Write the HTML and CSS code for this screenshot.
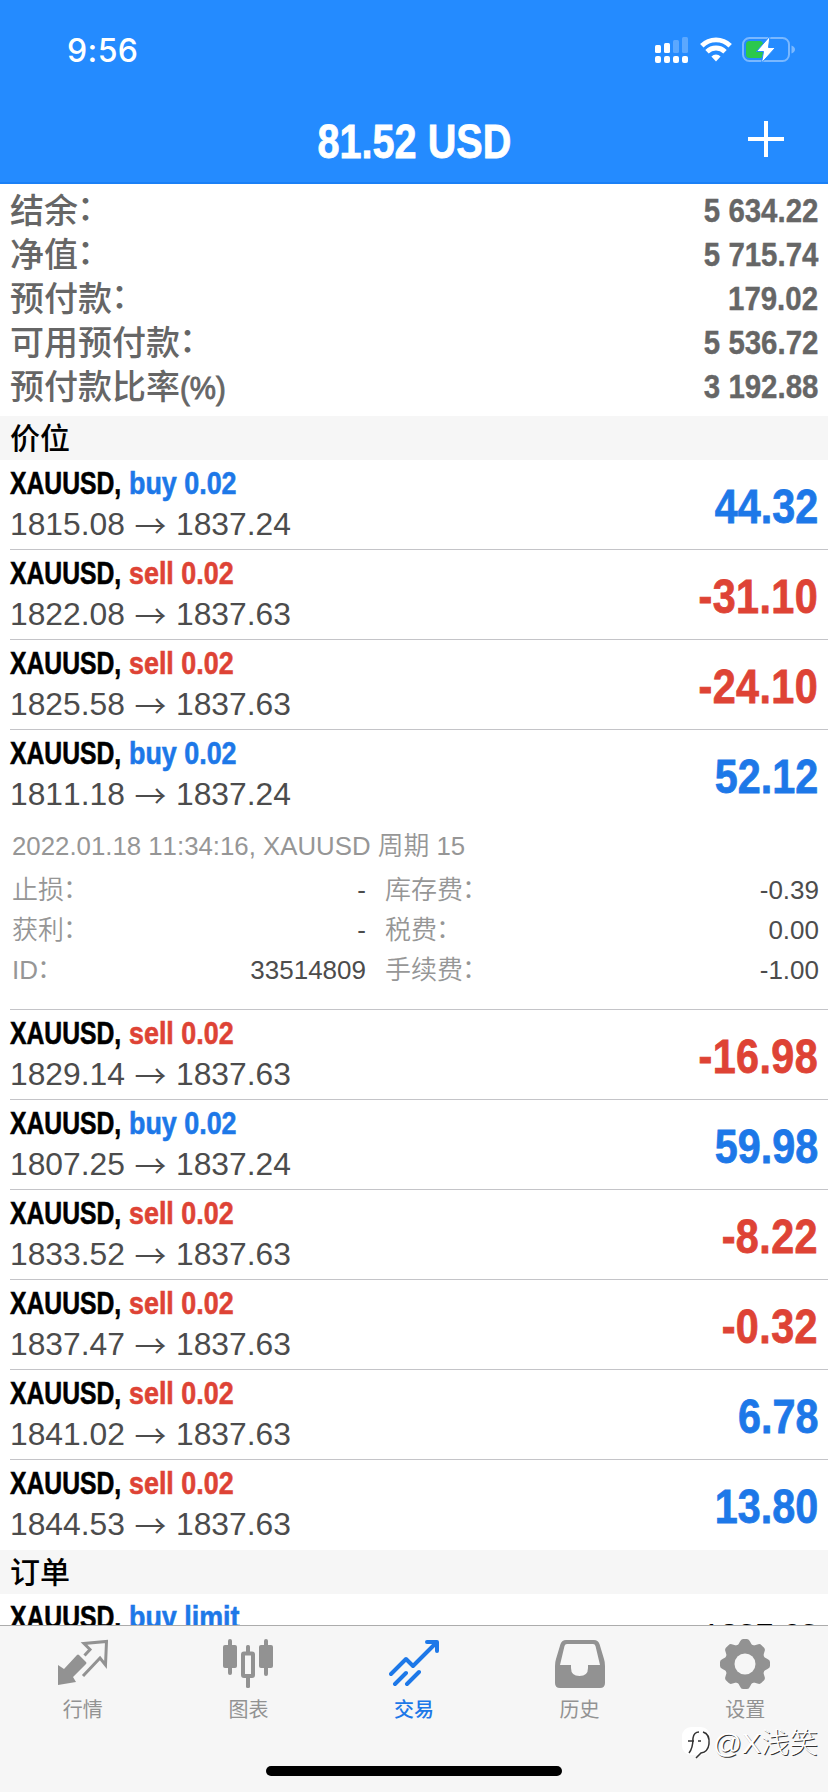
FILE: index.html
```html
<!DOCTYPE html>
<html lang="zh-CN">
<head>
<meta charset="utf-8">
<title>交易</title>
<link rel="stylesheet" href="styles.css">
</head>
<body>
<div class="screen">
  <header class="header">
    <div class="status">
      <span class="time">9:56</span>
      <div class="status-icons">
        <svg class="signal" width="34" height="28" viewBox="0 0 34 28" fill="#fff">
          <rect x="0" y="9" width="6" height="8" rx="1.5"/><rect x="9" y="7" width="6" height="10" rx="1.5"/>
          <g opacity=".25"><rect x="18" y="4" width="6" height="13" rx="1.5"/><rect x="27" y="1" width="6" height="16" rx="1.5"/></g>
          <rect x="0" y="20" width="6" height="7" rx="2"/><rect x="9" y="20" width="6" height="7" rx="2"/><rect x="18" y="20" width="6" height="7" rx="2"/><rect x="27" y="20" width="6" height="7" rx="2"/>
        </svg>
        <svg class="wifi" width="32" height="28" viewBox="0 0 32 28" fill="none" stroke="#fff" stroke-width="4.8">
          <path d="M1.800 9.700A20 20 0 0 1 30.200 9.700"/><path d="M7 15.700A12.800 12.800 0 0 1 25 15.700"/><path d="M11.400 20.400A6.500 6.500 0 0 1 20.600 20.400L16 25.500Z" fill="#fff" stroke="none"/>
        </svg>
        <svg class="battery" width="54" height="28" viewBox="0 0 54 28">
          <rect x="1" y="2" width="46" height="23" rx="6.5" fill="none" stroke="#7ab8ff" stroke-width="2"/>
          <rect x="4" y="5" width="17" height="17" rx="3.5" fill="#2bc84d"/>
          <path d="M49.500 9.500Q53 11 53 13.500T49.500 17.500Z" fill="#7ab8ff"/>
          <path d="M28 0 14.500 15.500H21.500L19.500 27 33.500 11.500H26.500Z" fill="#fff" stroke="#248bff" stroke-width="1"/>
        </svg>
      </div>
    </div>
    <div class="nav">
      <h1 class="title">81.52 USD</h1>
      <svg class="plus" width="36" height="36" viewBox="0 0 36 36" stroke="#fff" stroke-width="4"><path d="M18 0V36M0 18H36"/></svg>
    </div>
  </header>
  <main class="content">
    <section class="summary">
      <div class="sum-row"><span class="sum-label">结余<span class="colon">：</span></span><b class="sum-value">5 634.22</b></div>
      <div class="sum-row"><span class="sum-label">净值<span class="colon">：</span></span><b class="sum-value">5 715.74</b></div>
      <div class="sum-row"><span class="sum-label">预付款<span class="colon">：</span></span><b class="sum-value">179.02</b></div>
      <div class="sum-row"><span class="sum-label">可用预付款<span class="colon">：</span></span><b class="sum-value">5 536.72</b></div>
      <div class="sum-row"><span class="sum-label">预付款比率<span class="pct">(%)</span></span><b class="sum-value">3 192.88</b></div>
    </section>
    <h2 class="section">价位</h2>
    <div class="row"><div class="info"><div class="name"><b class="symbol">XAUUSD,</b><b class="side buy">buy 0.02</b></div><div class="prices"><span>1815.08</span><span class="arrow">→</span><span>1837.24</span></div></div><b class="profit buy">44.32</b></div>
    <div class="row"><div class="info"><div class="name"><b class="symbol">XAUUSD,</b><b class="side sell">sell 0.02</b></div><div class="prices"><span>1822.08</span><span class="arrow">→</span><span>1837.63</span></div></div><b class="profit sell">-31.10</b></div>
    <div class="row"><div class="info"><div class="name"><b class="symbol">XAUUSD,</b><b class="side sell">sell 0.02</b></div><div class="prices"><span>1825.58</span><span class="arrow">→</span><span>1837.63</span></div></div><b class="profit sell">-24.10</b></div>
    <div class="row open"><div class="info"><div class="name"><b class="symbol">XAUUSD,</b><b class="side buy">buy 0.02</b></div><div class="prices"><span>1811.18</span><span class="arrow">→</span><span>1837.24</span></div></div><b class="profit buy">52.12</b></div>
    <div class="details">
      <div class="comment">2022.01.18 11:34:16, XAUUSD 周期 15</div>
      <div class="grid">
        <span>止损<i class="colon">：</i></span><span class="val">-</span><span>库存费<i class="colon">：</i></span><span class="val">-0.39</span>
        <span>获利<i class="colon">：</i></span><span class="val">-</span><span>税费<i class="colon">：</i></span><span class="val">0.00</span>
        <span>ID<i class="colon">：</i></span><span class="val">33514809</span><span>手续费<i class="colon">：</i></span><span class="val">-1.00</span>
      </div>
    </div>
    <div class="row"><div class="info"><div class="name"><b class="symbol">XAUUSD,</b><b class="side sell">sell 0.02</b></div><div class="prices"><span>1829.14</span><span class="arrow">→</span><span>1837.63</span></div></div><b class="profit sell">-16.98</b></div>
    <div class="row"><div class="info"><div class="name"><b class="symbol">XAUUSD,</b><b class="side buy">buy 0.02</b></div><div class="prices"><span>1807.25</span><span class="arrow">→</span><span>1837.24</span></div></div><b class="profit buy">59.98</b></div>
    <div class="row"><div class="info"><div class="name"><b class="symbol">XAUUSD,</b><b class="side sell">sell 0.02</b></div><div class="prices"><span>1833.52</span><span class="arrow">→</span><span>1837.63</span></div></div><b class="profit sell">-8.22</b></div>
    <div class="row"><div class="info"><div class="name"><b class="symbol">XAUUSD,</b><b class="side sell">sell 0.02</b></div><div class="prices"><span>1837.47</span><span class="arrow">→</span><span>1837.63</span></div></div><b class="profit sell">-0.32</b></div>
    <div class="row"><div class="info"><div class="name"><b class="symbol">XAUUSD,</b><b class="side sell">sell 0.02</b></div><div class="prices"><span>1841.02</span><span class="arrow">→</span><span>1837.63</span></div></div><b class="profit buy">6.78</b></div>
    <div class="row last"><div class="info"><div class="name"><b class="symbol">XAUUSD,</b><b class="side sell">sell 0.02</b></div><div class="prices"><span>1844.53</span><span class="arrow">→</span><span>1837.63</span></div></div><b class="profit buy">13.80</b></div>
    <h2 class="section">订单</h2>
    <div class="row order"><div class="info"><div class="name"><b class="symbol">XAUUSD,</b><b class="side buy">buy limit</b></div></div><span class="order-price">1837.63</span></div>
  </main>
  <nav class="tabs">
    <div class="tab">
      <svg width="50" height="50" viewBox="0 0 50 50"><path d="M0 26 6 30 19 16Q20 15 21 16L28 23Q29 24 28 25L15 38 18 43 0 46Z" fill="#929292"/><path d="M26.500 16.500 32 10.500 26 4.500 48.500 2.500 47.500 26 42 19 25 37" fill="none" stroke="#929292" stroke-width="3"/></svg>
      <span>行情</span>
    </div>
    <div class="tab">
      <svg width="50" height="50" viewBox="0 0 50 50" fill="#929292"><rect x="5" y="0" width="4" height="36" rx="2"/><rect y="6" width="14" height="23" rx="2"/><rect x="41" y="0" width="4" height="37" rx="2"/><rect x="36" y="6" width="14" height="23" rx="2"/><rect x="23" y="6" width="4" height="43" rx="1.5"/><rect x="20" y="14.500" width="10" height="22.500" fill="#f6f6f6" stroke="#929292" stroke-width="4" rx="1"/></svg>
      <span>图表</span>
    </div>
    <div class="tab active">
      <svg width="50" height="50" viewBox="0 0 50 50" fill="none" stroke="#1d78e8" stroke-width="4" stroke-linecap="round" stroke-linejoin="round"><path d="M2 35 17 20 24 27 47 4M38 3H48V12M6 45 17 34M18 45 30 33"/></svg>
      <span>交易</span>
    </div>
    <div class="tab">
      <svg width="50" height="50" viewBox="0 0 50 50"><path fill="#929292" fill-rule="evenodd" d="M11 1H39Q43 1 44.500 5L49 20Q50 23 50 27V44Q50 49 45 49H5Q0 49 0 44V27Q0 23 1 20L5.500 5Q7 1 11 1ZM12 5Q10 5 9.500 7L5 26H16V29Q16 37 24.500 37T33 29V26H45L40.500 7Q40 5 38 5Z"/></svg>
      <span>历史</span>
    </div>
    <div class="tab">
      <svg width="50" height="50" viewBox="0 0 50 50"><g fill="#929292"><circle cx="25" cy="25" r="20.500"/><path id="tooth" d="M17 8 20 2.500Q21 0 23 0H27Q29 0 30 2.500L33 8V42L30 47.500Q29 50 27 50H23Q21 50 20 47.500L17 42Z"/><use href="#tooth" transform="rotate(45 25 25)"/><use href="#tooth" transform="rotate(90 25 25)"/><use href="#tooth" transform="rotate(135 25 25)"/></g><circle cx="25" cy="25" r="10.500" fill="#f6f6f6"/></svg>
      <span>设置</span>
    </div>
    <div class="home"></div>
    <div class="watermark">
      <svg width="32" height="34" viewBox="0 0 32 34"><rect x="1" y="1" width="28" height="28" rx="9" fill="#fff"/><path d="M7 15H13M8 27Q12 22 12 12Q13 6 18 6M17 15H20M22 6Q29 8 28 18Q27 26 20 27L15 32" fill="none" stroke="#333" stroke-width="1.500"/></svg>
      <span>@X浅笑</span>
    </div>
  </nav>
</div>
</body>
</html>
```
FILE: styles.css
```css
* { box-sizing: border-box; }
body { margin: 0; background: #fff; font-family: "Liberation Sans", "Noto Sans CJK SC", sans-serif; font-kerning: none; }
.screen { width: 828px; height: 1792px; display: flex; flex-direction: column; overflow: hidden; }
.header { height: 184px; flex: none; background: #248bff; color: #fff; border-bottom: 2px solid #1a80f6; }
.status { height: 100px; display: flex; justify-content: space-between; padding: 0 32px 0 67px; }
.time { font: 500 32px/102px Inter, sans-serif; letter-spacing: 0.4px; }
.status-icons { display: flex; align-items: center; }
.wifi { margin-left: 11px; }
.battery { margin-left: 10px; }
.nav { height: 82px; position: relative; display: flex; justify-content: center; }
.title { margin: 0; font-size: 48px; line-height: 84px; transform: scaleX(.825); -webkit-text-stroke: 0.8px; }
.plus { position: absolute; right: 44px; top: 21px; }
.content { height: 1441px; overflow: hidden; flex: none; }
.summary { height: 232px; padding: 4px 10px 0; color: #666; }
.sum-row { height: 44px; display: flex; justify-content: space-between; line-height: 44px; }
.sum-label { font-family: "Noto Sans CJK SC", sans-serif; font-size: 34px; font-weight: 500; line-height: 42px; }
.colon { position: relative; top: -3px; left: -1px; font-style: normal; }
.grid .colon { top: -1px; }
.pct { display: inline-block; font: 32px/42px "Liberation Sans", sans-serif; -webkit-text-stroke: 0.9px; transform: scaleX(.92); transform-origin: left; }
.sum-value { font-size: 34px; transform: scaleX(.865); transform-origin: right; -webkit-text-stroke: 0.4px; }
.section { margin: 0; height: 44px; padding-left: 10px; background: #f6f6f6; color: #000; font: 500 30px/41px "Noto Sans CJK SC", sans-serif; }
.row { height: 90px; margin-left: 10px; padding-right: 10px; display: flex; justify-content: space-between; border-bottom: 1px solid #c4c4c8; }
.open, .last { border-bottom-color: transparent; }
.info { padding-top: 3px; }
.name { display: flex; height: 41px; font-size: 32px; line-height: 40px; -webkit-text-stroke: 0.6px; }
.symbol { width: 119px; color: #000; transform: scaleX(.772); transform-origin: left; }
.side { white-space: nowrap; transform: scaleX(.84); transform-origin: left; }
.buy { color: #1d78e8; }
.sell { color: #de4335; }
.prices { display: flex; font-size: 31.800px; line-height: 40px; color: #4c4c4c; }
.arrow { width: 51px; text-align: center; font-family: "Noto Sans CJK SC", sans-serif; font-weight: 350; }
.profit { font-size: 48px; line-height: 94px; transform: scaleX(.86); transform-origin: right; -webkit-text-stroke: 0.8px; }
.profit.sell { letter-spacing: 0.5px; }
.details { height: 190px; margin-left: 10px; padding: 6px 9px 0 2px; border-bottom: 1px solid #c4c4c8; color: #969696; font-size: 26px; font-weight: 350; }
.comment { height: 44px; line-height: 41px; font-size: 25.800px; }
.grid { display: grid; grid-template-columns: 160px 194px 182px 1fr; grid-auto-rows: 40px; line-height: 40px; }
.grid .val { text-align: right; color: #4c4c4c; }
.grid span:nth-child(4n+3) { padding-left: 19px; }
.order-price { font-size: 32px; line-height: 80px; padding-top: 1px; }
.tabs { position: relative; height: 167px; flex: none; display: flex; background: #f6f6f6; border-top: 1px solid #acacac; }
.tab { flex: 1; display: flex; flex-direction: column; align-items: center; padding-top: 13px; color: #929292; font: 20px/28px "Noto Sans CJK SC", sans-serif; }
.tab span { margin-top: 6px; }
.active { color: #1d78e8; }
.active span { font-weight: 500; }
.home { position: absolute; left: 266px; top: 140px; width: 296px; height: 10px; border-radius: 5px; background: #000; }
.watermark { position: absolute; left: 681px; top: 100px; display: flex; align-items: center; color: #fff; font: 300 28.500px/34px "Liberation Sans", "Noto Sans CJK SC", sans-serif; text-shadow: 1px 1px 0 #333; white-space: nowrap; }
```
